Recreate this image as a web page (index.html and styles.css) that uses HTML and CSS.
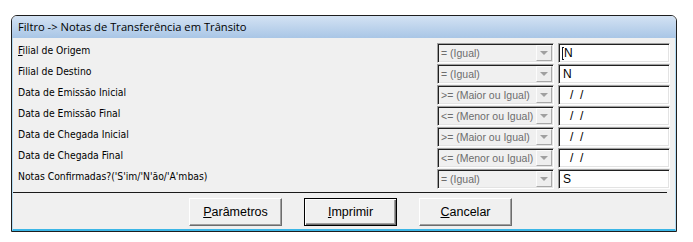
FILE: index.html
```html
<!DOCTYPE html>
<html lang="pt">
<head>
  <meta charset="UTF-8">
  <title>Filtro</title>
  <link rel="stylesheet" href="styles.css">
</head>
<body>

<div class="window">
  <div class="titlebar">Filtro -&gt; Notas de Transferência em Trânsito</div>
  <div class="client">
    <div class="fields">
      <div class="row">
        <label class="lbl"><u>F</u>ilial de Origem</label>
        <div class="combo"><span class="combo-text">= (Igual)</span><span class="combo-btn"><span class="arrow"></span></span></div>
        <div class="edit"><span class="caret"></span>N</div>
      </div>
      <div class="row">
        <label class="lbl">Filial de Destino</label>
        <div class="combo"><span class="combo-text">= (Igual)</span><span class="combo-btn"><span class="arrow"></span></span></div>
        <div class="edit">N</div>
      </div>
      <div class="row">
        <label class="lbl">Data de Emissão Inicial</label>
        <div class="combo"><span class="combo-text">&gt;= (Maior ou Igual)</span><span class="combo-btn"><span class="arrow"></span></span></div>
        <div class="edit date">/&nbsp;&nbsp;/</div>
      </div>
      <div class="row">
        <label class="lbl">Data de Emissão Final</label>
        <div class="combo"><span class="combo-text">&lt;= (Menor ou Igual)</span><span class="combo-btn"><span class="arrow"></span></span></div>
        <div class="edit date">/&nbsp;&nbsp;/</div>
      </div>
      <div class="row">
        <label class="lbl">Data de Chegada Inicial</label>
        <div class="combo"><span class="combo-text">&gt;= (Maior ou Igual)</span><span class="combo-btn"><span class="arrow"></span></span></div>
        <div class="edit date">/&nbsp;&nbsp;/</div>
      </div>
      <div class="row">
        <label class="lbl">Data de Chegada Final</label>
        <div class="combo"><span class="combo-text">&lt;= (Menor ou Igual)</span><span class="combo-btn"><span class="arrow"></span></span></div>
        <div class="edit date">/&nbsp;&nbsp;/</div>
      </div>
      <div class="row">
        <label class="lbl">Notas Confirmadas?('S'im/'N'ão/'A'mbas)</label>
        <div class="combo"><span class="combo-text">= (Igual)</span><span class="combo-btn"><span class="arrow"></span></span></div>
        <div class="edit">S</div>
      </div>
    </div>

    <div class="sep"></div>

    <div class="buttons">
      <button class="btn"><u>P</u>arâmetros</button>
      <button class="btn btn-default"><u>I</u>mprimir</button>
      <button class="btn"><u>C</u>ancelar</button>
    </div>
  </div>
</div>

</body>
</html>
```

FILE: styles.css
```css
body {
  margin: 0;
  background: #fff;
}
.window {
  margin: 15px 0 0 11px;
  width: 664px;
  border: 1px solid #1e1e1e;
  border-radius: 6px 6px 0 0;
  overflow: hidden;
}
.titlebar {
  height: 22px;
  line-height: 22px;
  padding-left: 6px;
  background: linear-gradient(#d3e2f3, #a9c6e6);
  font-family: "Open Sans", "Noto Sans", sans-serif;
  font-size: 11.2px;
  color: #000;
}
.client {
  background: #f0f0f0;
  border-left: 1px solid #b4dcf2;
  border-right: 1px solid #b4dcf2;
  border-bottom: 2px solid #3bb6e6;
  padding-bottom: 3px;
}
.fields {
  padding: 5px 5px 0 5px;
}
.row {
  display: grid;
  grid-template-columns: 1fr 117px 112px;
  column-gap: 4px;
  height: 21px;
}
.lbl {
  font-family: "DejaVu Sans Condensed", "DejaVu Sans", sans-serif;
  font-size: 10.3px;
  color: #000;
  padding-top: 1px;
}
.combo, .edit {
  height: 20px;
  box-sizing: border-box;
  border: 1px solid;
  border-color: #a0a0a0 #fff #fff #a0a0a0;
  box-shadow: inset 1px 1px 0 #202020, inset -1px -1px 0 #e3e3e3;
  display: flex;
  align-items: center;
}
.combo {
  background: #f0f0f0;
  justify-content: space-between;
}
.combo-text {
  padding-left: 3px;
  font-family: "Liberation Sans", Arial, sans-serif;
  font-size: 10.5px;
  color: #6d6d6d;
  white-space: nowrap;
}
.combo-btn {
  width: 16px;
  height: 16px;
  margin-right: 1px;
  box-sizing: border-box;
  border: 1px solid;
  border-color: #fcfcfc #a8a8a8 #a8a8a8 #fcfcfc;
  background: #eeeeee;
  display: flex;
  align-items: center;
  justify-content: center;
}
.arrow {
  width: 0;
  height: 0;
  border-left: 4px solid transparent;
  border-right: 4px solid transparent;
  border-top: 4px solid #a0a0a0;
}
.edit {
  background: #fff;
  padding-left: 4px;
  font-family: "Liberation Sans", Arial, sans-serif;
  font-size: 12px;
  color: #000;
}
.edit.date {
  padding-left: 11px;
}
.caret {
  width: 2px;
  height: 13px;
  box-sizing: border-box;
  border-left: 1px solid #101828;
  border-top: 1px solid #101828;
  border-bottom: 1px solid #101828;
  margin-left: -1px;
}
.sep {
  height: 1px;
  background: #1a1a1a;
  margin: 2px 8px 0 0;
}
.buttons {
  display: flex;
  gap: 22px;
  padding: 5px 0 0 176px;
}
.btn {
  width: 93px;
  height: 28px;
  box-sizing: border-box;
  background: #f0f0f0;
  border: 1px solid;
  border-color: #fff #6d6d6d #6d6d6d #fff;
  box-shadow: inset -1px -1px 0 #a0a0a0;
  font-family: "Liberation Sans", Arial, sans-serif;
  font-size: 12.5px;
  color: #000;
  padding: 0;
}
.btn-default {
  border: 1px solid #000;
  box-shadow: inset 1px 1px 0 #fff, inset -1px -1px 0 #6d6d6d, inset -2px -2px 0 #a0a0a0;
}
```
